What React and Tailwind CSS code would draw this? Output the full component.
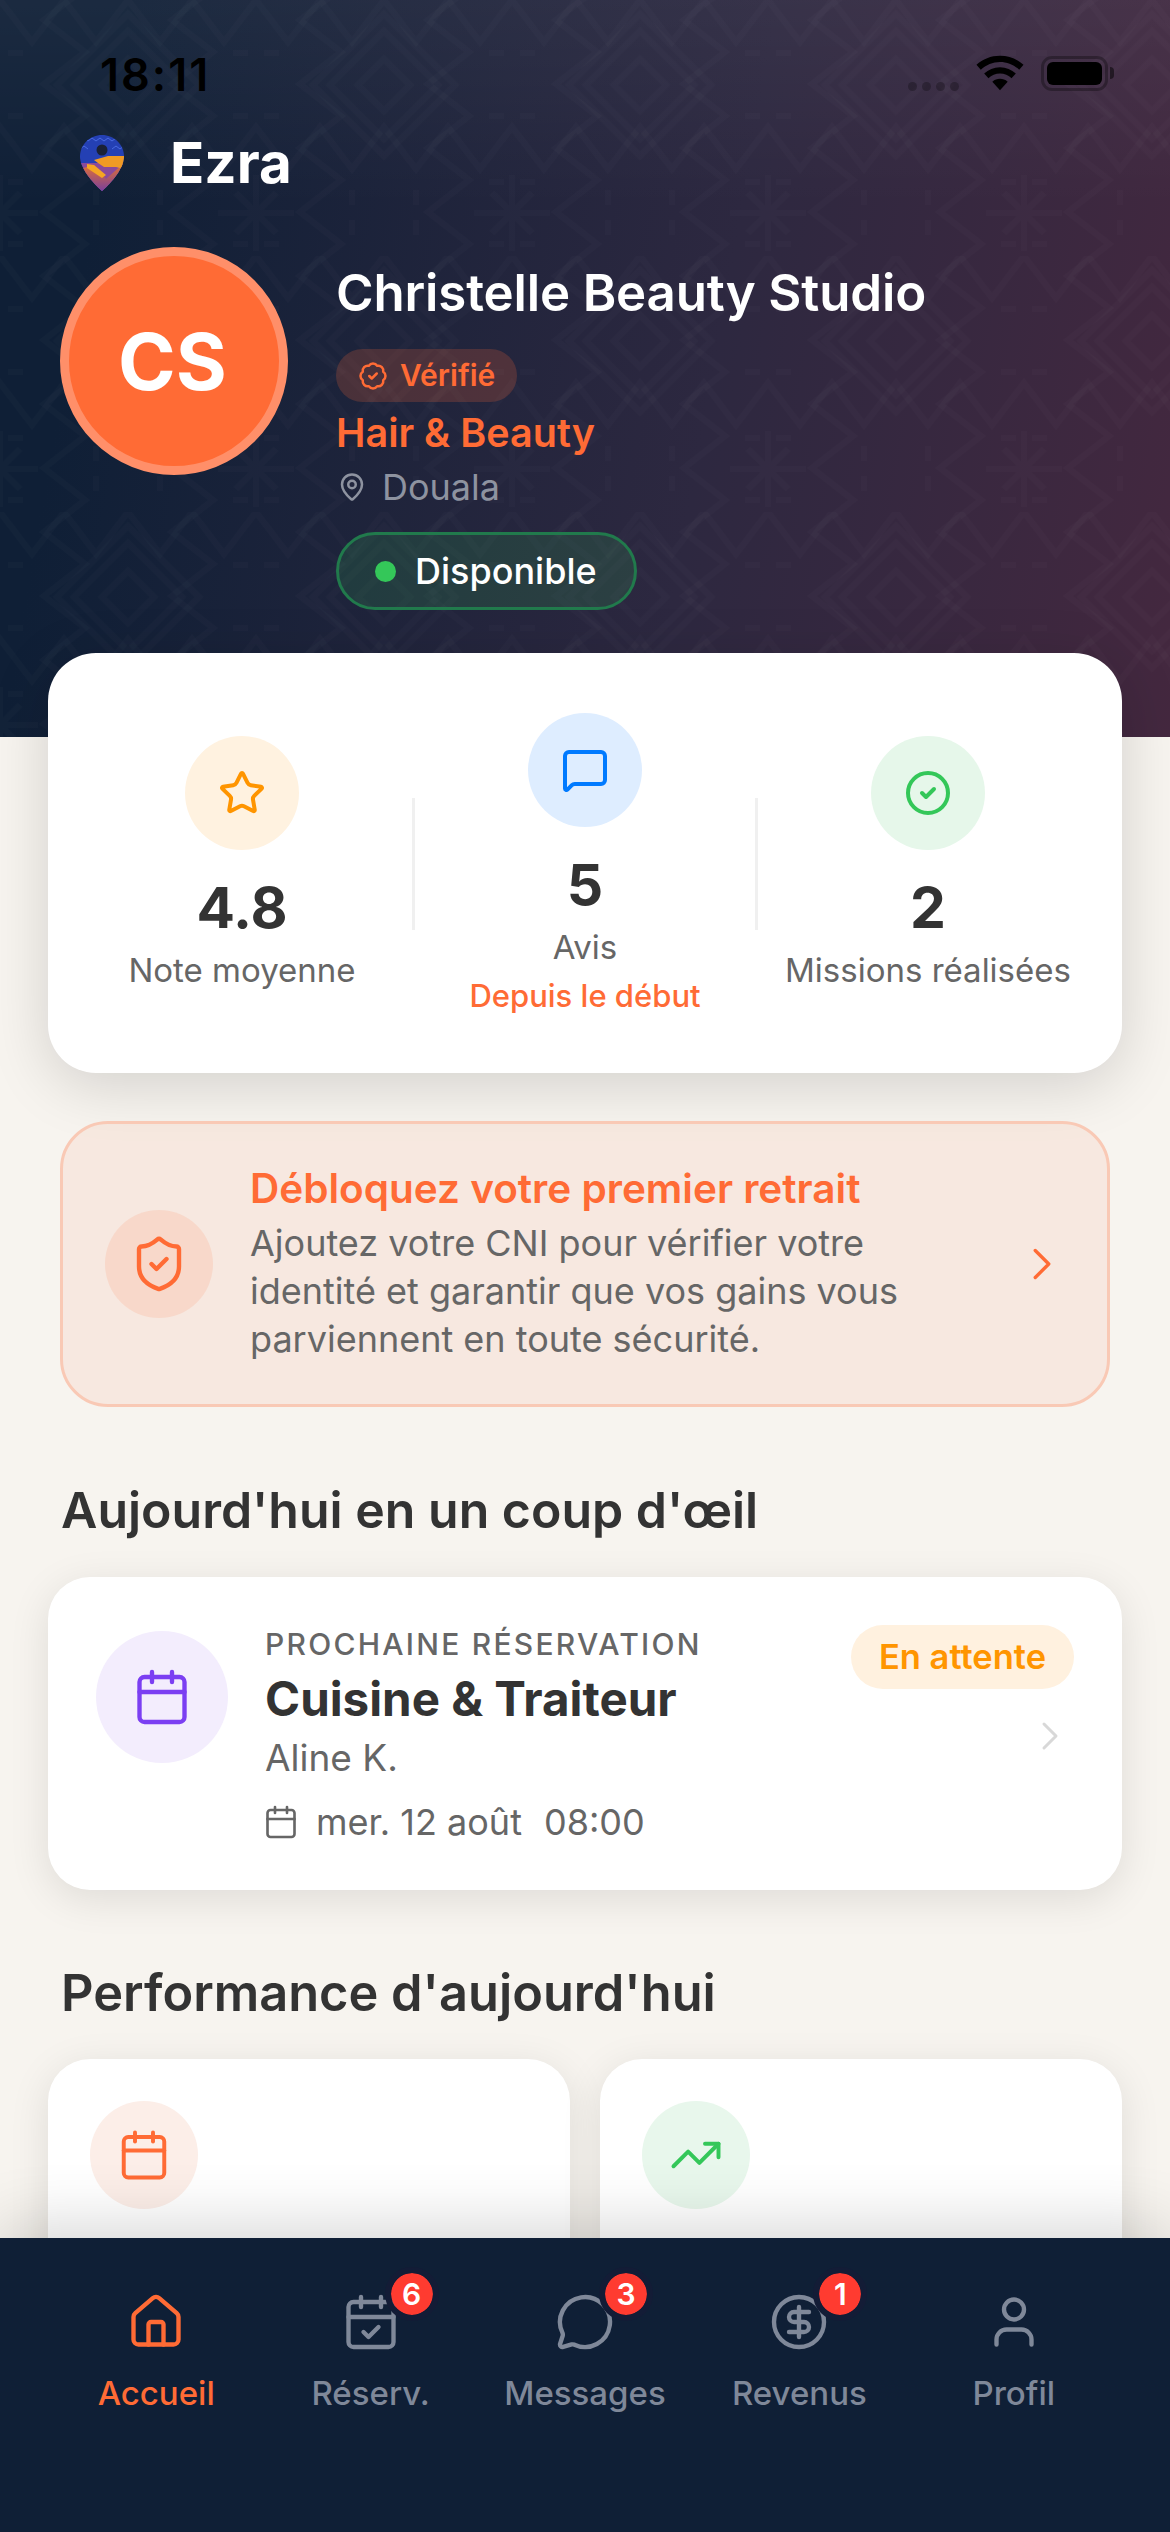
import React from "react";
import {
  House, CalendarCheck, MessageCircle, CircleDollarSign, User, Star, MessageSquare, CircleCheck,
  ShieldCheck, ChevronRight, Calendar, TrendingUp, BadgeCheck, MapPin,
} from "lucide-react";

const zig = (y, amp) => {
  let d = "";
  for (let i = -1; i <= 5; i++) {
    d += `${i === -1 ? "M" : "L"}${i * 64} ${y} L${i * 64 + 32} ${y + amp} `;
  }
  return d;
};
const vzig = (x, w) => {
  let d = "";
  for (let i = -1; i <= 5; i++) {
    d += `${i === -1 ? "M" : "L"}${x} ${i * 64 + 20} L${x + w} ${i * 64 + 52} `;
  }
  return d;
};

function Asterisk({ x }) {
  return (
    <g transform={`translate(${x} 213)`}>
      <path d="M0 -38V38M-38 0H38M-20 -20L20 20M20 -20L-20 20M-23 31H-8M8 31H23M-23 -31H-8M8 -31H23" />
    </g>
  );
}

function Pattern() {
  return (
    <svg className="absolute inset-0 w-full h-full" aria-hidden="true">
      <defs>
        <pattern id="tile" width="256" height="256" patternUnits="userSpaceOnUse">
          <g fill="none" stroke="#fff" strokeOpacity="0.014" strokeWidth="6">
            <path d={zig(0, 42)} />
            <path d={zig(127, 42)} />
            <path d={vzig(172, 41)} />
            <path d={vzig(44, 41)} />
            <path d="M128 31L182 85L128 139L74 85ZM128 59L154 85L128 111L102 85Z" />
            <path d="M128 14L199 85L128 156L57 85Z" />
            <Asterisk x={0} />
            <Asterisk x={256} />
            <path d="M-23 53H-8M8 53H23M233 53H248M264 53H279M-23 116H-8M8 116H23M233 116H248M264 116H279" />
            <path d="M96 190V205M96 220V235M160 190V205M160 220V235" />
          </g>
        </pattern>
      </defs>
      <rect width="100%" height="100%" fill="url(#tile)" />
    </svg>
  );
}

function Logo() {
  return (
    <svg width="44" height="56" viewBox="0 0 44 56" className="shrink-0">
      <defs>
        <clipPath id="pin">
          <path d="M22 0C10 0 0 9.500 0 21.500C0 33 12 47 22 56C32 47 44 33 44 21.500C44 9.500 34 0 22 0Z" />
        </clipPath>
        <linearGradient id="low" x1="0" y1="0" x2="0" y2="1">
          <stop offset="0" stopColor="#e8742c" />
          <stop offset="1" stopColor="#7a3f9c" />
        </linearGradient>
      </defs>
      <g clipPath="url(#pin)">
        <rect width="44" height="56" fill="#2440b4" />
        <path d="M0 6l4 -3 4 3 4 -3 4 3 4 -3 4 3 4 -3 4 3 4 -3 4 3M0 14l4 -3 4 3M32 14l4 -3 4 3 4 -3" stroke="#4a6ae0" strokeWidth="1" fill="none" />
        <path d="M0 28H44V56H0Z" fill="#8a4a9a" />
        <path d="M0 34L14 30L26 44L44 28V56H0Z" fill="url(#low)" />
        <path d="M14 25L28 21H44V34L36 32H24L18 28Z" fill="#f09a24" />
        <path d="M7 29L14 30L26 40L22 43L7 33Z" fill="#f5a623" />
      </g>
      <circle cx="22" cy="15" r="5.500" fill="#1a2136" />
    </svg>
  );
}

function StatusBar() {
  return (
    <div className="flex items-start justify-between pt-[55px] pl-[100px] pr-[56px] h-[91px]">
      <span className="text-[45px] leading-[40px] font-semibold text-black tracking-[2px]">18:11</span>
      <div className="flex items-center">
        <div className="flex gap-[5px] mt-[27px] opacity-25">
          <span className="w-[9px] h-[9px] rounded-full bg-black" />
          <span className="w-[9px] h-[9px] rounded-full bg-black" />
          <span className="w-[9px] h-[9px] rounded-full bg-black" />
          <span className="w-[9px] h-[9px] rounded-full bg-black" />
        </div>
        <svg width="48" height="36" viewBox="0 0 50 36" className="ml-[17px]">
          <path d="M25 0C15.500 0 7 3.500 0.500 9.500L5 14.500C10.500 9.500 17.500 6.500 25 6.500C32.500 6.500 39.500 9.500 45 14.500L49.500 9.500C43 3.500 34.500 0 25 0Z" fill="#000" />
          <path d="M25 12C18.500 12 13 14.500 8.500 18.500L13 23.500C16 20.500 20.500 18.500 25 18.500C29.500 18.500 34 20.500 37 23.500L41.500 18.500C37 14.500 31.500 12 25 12Z" fill="#000" />
          <path d="M25 24C22 24 19.500 25 17 27L25 36L33 27C30.500 25 28 24 25 24Z" fill="#000" />
        </svg>
        <div className="ml-[17px] flex items-center">
          <div className="w-[67px] h-[35px] rounded-[11px] border-[3px] border-black/30 p-[3px]">
            <div className="w-full h-full rounded-[6px] bg-black" />
          </div>
          <div className="w-[4px] h-[12px] rounded-r-full bg-black/50 ml-[2px]" />
        </div>
      </div>
    </div>
  );
}

function Stat({ circle, icon, value, label, sub }) {
  return (
    <div className="flex-1 flex flex-col items-center">
      <div className={`w-[114px] h-[114px] rounded-full flex items-center justify-center ${circle}`}>{icon}</div>
      <div className="mt-[22px] h-[72px] leading-[72px] text-[57px] font-bold text-[#333333]">{value}</div>
      <div className="mt-[5px] h-[42px] leading-[42px] text-[33px] text-[#666666] whitespace-nowrap">{label}</div>
      {sub && <div className="mt-[10px] h-[36px] leading-[36px] text-[31px] font-medium text-[#ff6b35] whitespace-nowrap">{sub}</div>}
    </div>
  );
}

function NavItem({ icon, label, active, badge }) {
  return (
    <div className="flex flex-col items-center">
      <div className="relative w-[60px] h-[60px]">
        {icon}
        {badge && (
          <span className="absolute -top-[19px] left-[50px] w-[42px] h-[42px] rounded-full bg-[#ff3b30] text-white text-[30px] font-semibold flex items-center justify-center outline-[6px] outline-solid outline-[#131c36]">
            {badge}
          </span>
        )}
      </div>
      <div className={`mt-[20px] h-[42px] leading-[42px] text-[33px] font-medium ${active ? "text-[#ff6b35]" : "text-[#7f8899]"}`}>{label}</div>
    </div>
  );
}

export default function App() {
  return (
    <div className="relative w-[1170px] h-[2532px] overflow-hidden flex flex-col bg-[#f7f4ef] font-['Inter',sans-serif]">
      <header className="relative h-[737px] shrink-0 bg-[linear-gradient(180deg,rgba(255,255,255,0.05),transparent_28%),linear-gradient(100deg,#0f1f36_10%,#2d2840_60%,#44283f_100%)]">
        <Pattern />
        <div className="relative">
          <StatusBar />
          <div className="flex items-center pl-[80px] gap-[46px] mt-[44px] h-[56px]">
            <Logo />
            <span className="text-[56.5px] font-bold text-white leading-[56px]">Ezra</span>
          </div>
          <div className="flex items-start mt-[56px] pl-[60px] gap-[48px]">
            <div className="w-[228px] h-[228px] rounded-full bg-[#ff6b35] border-[9px] border-[#ff8f69] flex items-center justify-center text-[78px] font-bold text-white pr-[3px]">
              CS
            </div>
            <div className="flex flex-col items-start">
              <div className="mt-[16px] h-[60px] leading-[60px] text-[51px] font-semibold tracking-[-0.15px] text-white whitespace-nowrap">Christelle Beauty Studio</div>
              <div className="mt-[26px] h-[53px] w-[181px] rounded-full bg-[#ff6b35]/20 flex items-center pl-[22px] gap-[12px]">
                <BadgeCheck size={30} className="text-[#ff6b35]" strokeWidth={2} />
                <span className="text-[30px] font-semibold text-[#ff6b35]">Vérifié</span>
              </div>
              <div className="mt-[7px] h-[48px] leading-[48px] text-[39.5px] font-semibold text-[#ff6b35]">Hair &amp; Beauty</div>
              <div className="mt-[8px] h-[44px] flex items-center gap-[15px] pl-[1px]">
                <MapPin size={30} className="text-[#8e93a0]" />
                <span className="text-[36px] text-[#8e93a0]">Douala</span>
              </div>
              <div className="mt-[23px] h-[78px] w-[301px] rounded-full border-[3px] border-[#217a4c] bg-[#34c759]/15 flex items-center pl-[36px] gap-[19px]">
                <span className="w-[21px] h-[21px] rounded-full bg-[#34c759]" />
                <span className="text-[36px] font-medium text-white">Disponible</span>
              </div>
            </div>
          </div>
        </div>
      </header>

      <main className="relative z-10 flex-1 min-h-0 -mt-[84px]">
        <section className="mx-[48px] h-[420px] rounded-[48px] bg-white shadow-[0_12px_60px_rgba(0,0,0,0.15)] flex items-center px-[24px] pt-[1px]">
          <Stat circle="bg-[#fff2e0]" icon={<Star size={48} className="text-[#ff9500]" />} value="4.8" label="Note moyenne" />
          <div className="w-[3px] h-[132px] bg-[#f0f0f0]" />
          <Stat circle="bg-[#deedff]" icon={<MessageSquare size={48} className="text-[#007aff]" />} value="5" label="Avis" sub="Depuis le début" />
          <div className="w-[3px] h-[132px] bg-[#f0f0f0]" />
          <Stat circle="bg-[#e6f7ea]" icon={<CircleCheck size={48} className="text-[#34c759]" />} value="2" label="Missions réalisées" />
        </section>

        <section className="mt-[48px] mx-[60px] h-[286px] rounded-[48px] border-[3px] border-[#f9c9b5] bg-[#ff6b35]/8 flex items-center pl-[42px] pr-[38px]">
          <div className="w-[108px] h-[108px] rounded-full bg-[#ff6b35]/12 flex items-center justify-center shrink-0">
            <ShieldCheck size={60} strokeWidth={1.75} className="text-[#ff6b35]" />
          </div>
          <div className="ml-[37px] flex-1">
            <div className="h-[48px] leading-[48px] text-[40.5px] font-semibold text-[#ff6b35]">Débloquez votre premier retrait</div>
            <p className="mt-[6px] max-w-[700px] text-[36px] leading-[48px] text-[#666666]">
              Ajoutez votre CNI pour vérifier votre identité et garantir que vos gains vous parviennent en toute sécurité.
            </p>
          </div>
          <ChevronRight size={54} strokeWidth={1.5} className="text-[#ff6b35] shrink-0" />
        </section>

        <h2 className="mt-[71px] ml-[61px] h-[64px] leading-[64px] text-[50px] font-semibold text-[#333333]">Aujourd'hui en un coup d'œil</h2>

        <section className="mt-[35px] mx-[48px] h-[313px] rounded-[42px] bg-white shadow-[0_9px_40px_rgba(0,0,0,0.1)] flex items-start pl-[48px] pr-[48px]">
          <div className="mt-[54px] w-[132px] h-[132px] rounded-full bg-[#f3edfd] flex items-center justify-center shrink-0">
            <Calendar size={60} strokeWidth={1.75} className="text-[#7b3ff2]" />
          </div>
          <div className="ml-[37px] flex-1 pt-[49px]">
            <div className="h-[36px] leading-[36px] text-[30px] font-medium tracking-[2.25px] text-[#666666] whitespace-nowrap">PROCHAINE RÉSERVATION</div>
            <div className="mt-[7px] h-[60px] leading-[60px] text-[47.5px] font-bold text-[#333333]">Cuisine &amp; Traiteur</div>
            <div className="mt-[7px] h-[44px] leading-[44px] text-[37px] text-[#666666]">Aline K.</div>
            <div className="mt-[20px] h-[44px] flex items-center text-[36px] text-[#666666]">
              <Calendar size={36} strokeWidth={1.75} className="shrink-0 -ml-[2px]" />
              <span className="ml-[17px]">mer. 12 août</span>
              <span className="ml-[22px]">08:00</span>
            </div>
          </div>
          <div className="pt-[48px] flex flex-col items-end">
            <div className="h-[64px] w-[223px] rounded-full bg-[#fff1df] flex items-center justify-center text-[34.5px] font-semibold text-[#ff9500]">En attente</div>
            <ChevronRight size={48} strokeWidth={1.5} className="mt-[23px] text-[#d8d8d8]" />
          </div>
        </section>

        <h2 className="mt-[71px] ml-[61px] h-[64px] leading-[64px] text-[50.5px] font-semibold text-[#333333]">Performance d'aujourd'hui</h2>

        <section className="mt-[34px] mx-[48px] grid grid-cols-2 gap-[30px]">
          <div className="h-[300px] rounded-[42px] bg-white shadow-[0_9px_40px_rgba(0,0,0,0.1)] pt-[42px] pl-[42px]">
            <div className="w-[108px] h-[108px] rounded-full bg-[#fceee8] flex items-center justify-center">
              <Calendar size={54} strokeWidth={1.75} className="text-[#ff6b35]" />
            </div>
          </div>
          <div className="h-[300px] rounded-[42px] bg-white shadow-[0_9px_40px_rgba(0,0,0,0.1)] pt-[42px] pl-[42px]">
            <div className="w-[108px] h-[108px] rounded-full bg-[#e8f7ec] flex items-center justify-center">
              <TrendingUp size={54} strokeWidth={1.75} className="text-[#34c759]" />
            </div>
          </div>
        </section>
      </main>

      <nav className="relative z-20 h-[294px] shrink-0 bg-[#0f1f36] shadow-[0_-12px_60px_rgba(0,0,0,0.16)] grid grid-cols-5 px-[49px] pt-[54px]">
        <NavItem active label="Accueil" icon={<House size={60} strokeWidth={1.75} className="text-[#ff6b35]" />} />
        <NavItem label="Réserv." badge="6" icon={<CalendarCheck size={60} strokeWidth={1.75} className="text-[#7f8899]" />} />
        <NavItem label="Messages" badge="3" icon={<MessageCircle size={60} strokeWidth={1.75} className="text-[#7f8899]" />} />
        <NavItem label="Revenus" badge="1" icon={<CircleDollarSign size={60} strokeWidth={1.75} className="text-[#7f8899]" />} />
        <NavItem label="Profil" icon={<User size={60} strokeWidth={1.75} className="text-[#7f8899]" />} />
      </nav>
    </div>
  );
}
